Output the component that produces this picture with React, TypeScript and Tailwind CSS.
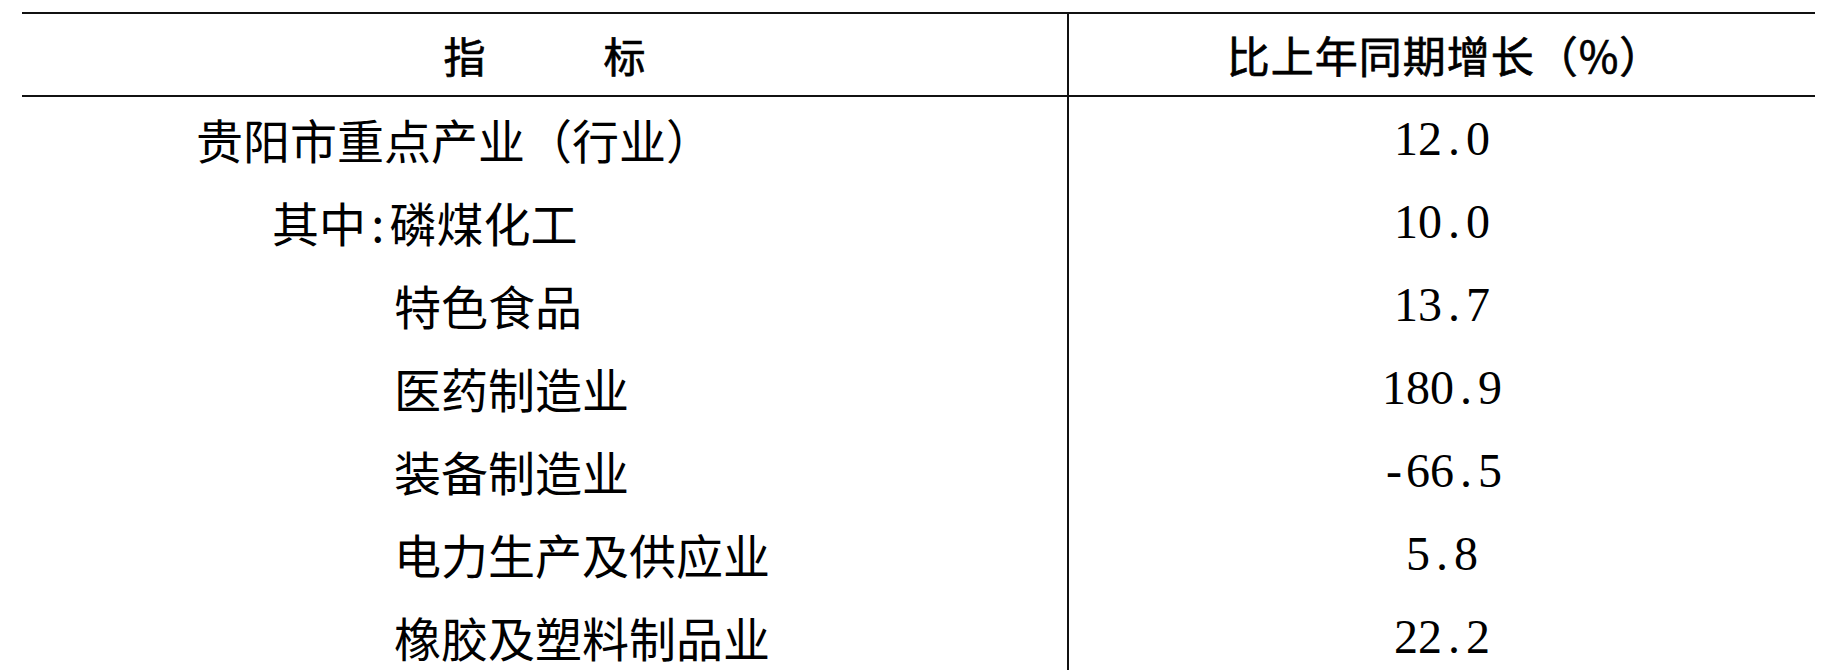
const rows: { name: string; indent: string; value: string }[] = [
  { name: '贵阳市重点产业（行业）', indent: 'pl-[174px]', value: '12.0' },
  { name: '其中:磷煤化工', indent: 'pl-[250px]', value: '10.0' },
  { name: '特色食品', indent: 'pl-[372px]', value: '13.7' },
  { name: '医药制造业', indent: 'pl-[372px]', value: '180.9' },
  { name: '装备制造业', indent: 'pl-[372px]', value: '-66.5' },
  { name: '电力生产及供应业', indent: 'pl-[372px]', value: '5.8' },
  { name: '橡胶及塑料制品业', indent: 'pl-[372px]', value: '22.2' },
]

const cjk = "font-['Noto_Sans_CJK_SC',sans-serif]"

function Name({ text }: { text: string }) {
  // half-width colon like the original 宋体 layout
  const parts = text.split(':')
  if (parts.length === 1) return <>{text}</>
  return (
    <>
      {parts[0]}
      <span className="inline-block w-[0.5em] text-center">:</span>
      {parts[1]}
    </>
  )
}

function Num({ value }: { value: string }) {
  return (
    <span className="font-['Liberation_Serif',serif] text-[48px] leading-none font-normal">
      {value.split('').map((c, i) => (
        <span key={i} className="inline-block w-[24px] text-center">
          {c}
        </span>
      ))}
    </span>
  )
}

export default function App() {
  return (
    <div className={`h-[670px] w-[1821px] overflow-hidden bg-white pt-[12px] text-black ${cjk}`}>
      <div className="ml-[22px] w-[1793px] border-t-2 border-[#111]">
        <div className="grid grid-cols-[1047px_1fr]">
          <div className="flex h-[83px] items-center justify-center gap-[118px] border-r-2 border-b-2 border-[#111] text-[42px] leading-none [-webkit-text-stroke:0.7px_black]">
            <span>指</span>
            <span>标</span>
          </div>
          <div className="flex h-[83px] items-center justify-center border-b-2 border-[#111] pl-[6px] text-[43px] leading-none tracking-[1px] [-webkit-text-stroke:0.7px_black]">
            比上年同期增长（%）
          </div>
          {rows.map((r) => (
            <div key={r.name} className="contents">
              <div className={`flex h-[83px] items-center border-r-2 border-[#111] text-[47px] leading-none ${r.indent}`}>
                <Name text={r.name} />
              </div>
              <div className="flex h-[83px] items-center justify-center">
                <Num value={r.value} />
              </div>
            </div>
          ))}
        </div>
      </div>
    </div>
  )
}
